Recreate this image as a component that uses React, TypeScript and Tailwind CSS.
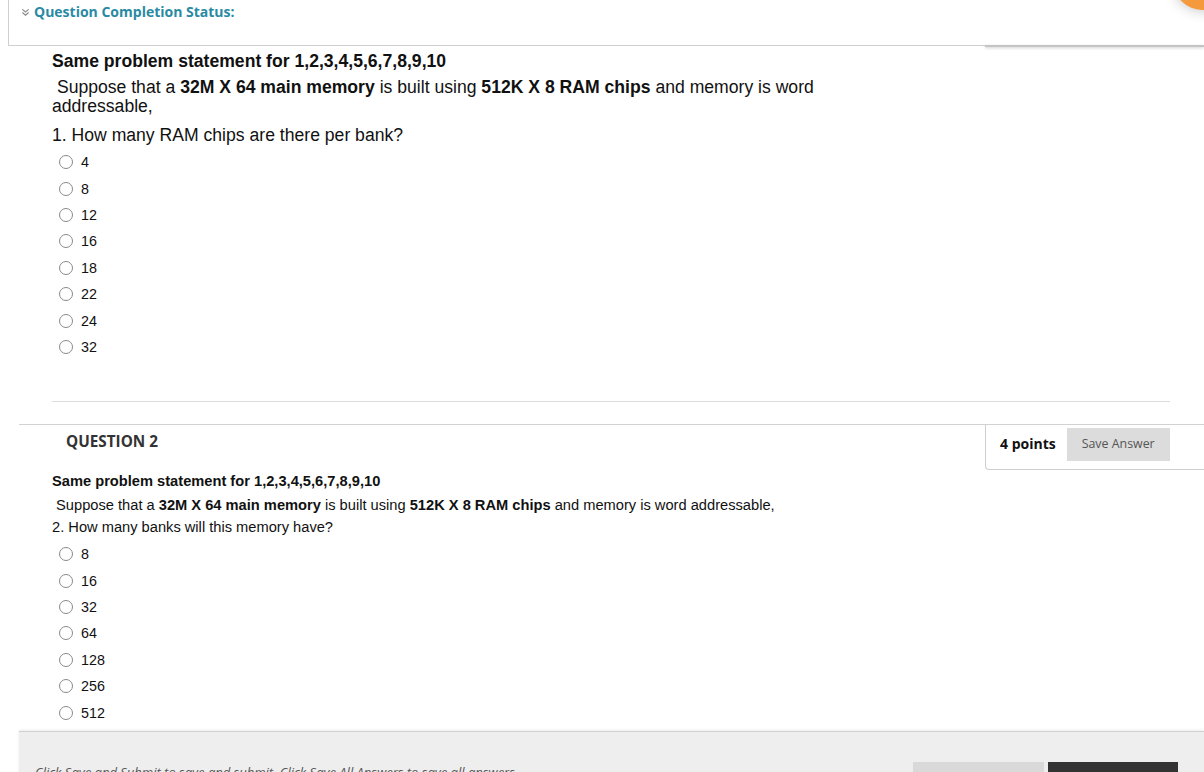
import React from 'react';

const q1Options = ['4', '8', '12', '16', '18', '22', '24', '32'];
const q2Options = ['8', '16', '32', '64', '128', '256', '512'];

function Radio({ label }: { label: string }) {
  return (
    <div className="flex h-[26.4px] items-center">
      <span className="ml-[7px] h-[14px] w-[14px] rounded-full border border-[#8a8a8a] bg-white" />
      <span className="ml-[8px] text-[14.3px] leading-[16px] text-[#111]">{label}</span>
    </div>
  );
}

function DoubleChevron() {
  return (
    <svg width="9" height="9" viewBox="0 0 10 10" className="mr-[4px] mt-[1px]">
      <path d="M1.5 1.5 L5 4.5 L8.5 1.5" fill="none" stroke="#8a8a8a" strokeWidth="1.3" />
      <path d="M1.5 5 L5 8 L8.5 5" fill="none" stroke="#8a8a8a" strokeWidth="1.3" />
    </svg>
  );
}

export default function App() {
  return (
    <div className="relative h-[772px] w-[1204px] overflow-hidden bg-white font-['Liberation_Sans',Arial,sans-serif] text-[#111]">
      {/* orange corner badge */}
      <div className="absolute right-[-34px] top-[-46px] h-[56px] w-[64px] rounded-full bg-[#f59a3c] shadow-[0_0_14px_rgba(0,0,0,0.25)]" />

      {/* Question Completion Status */}
      <div className="relative ml-[8px] h-[46px] border-b border-l border-[#cfcfcf]">
        <div className="flex items-center pl-[12px] pt-[3px] font-['Open_Sans',sans-serif] text-[14px] font-bold leading-[18px] text-[#2a8aa3]">
          <DoubleChevron />
          <span>Question Completion Status:</span>
        </div>
        <div className="absolute bottom-[-2px] right-0 h-[2px] w-[219px] bg-[#c4c4c4] shadow-[0_1px_3px_rgba(0,0,0,0.2)]" />
      </div>

      {/* Question 1 body */}
      <div className="pl-[52px] pt-[6px]">
        <div className="text-[17.6px] font-bold leading-[19px]">Same problem statement for 1,2,3,4,5,6,7,8,9,10</div>
        <p className="mt-[7px] max-w-[800px] text-[17.6px] leading-[19px]">
          {'\u00a0'}Suppose that a <b>32M X 64 main memory</b> is built using <b>512K X 8 RAM chips</b> and memory is word addressable,
        </p>
        <p className="mt-[10px] text-[17.6px] leading-[19px]">1. How many RAM chips are there per bank?</p>
        <div className="mt-[4px]">
          {q1Options.map((o) => (
            <Radio key={o} label={o} />
          ))}
        </div>
        <div className="mt-[41px] w-[1118px] border-t border-[#dcdcdc]" />
      </div>

      {/* Question 2 */}
      <div className="ml-[19px] mt-[22px] border-t border-[#d2d2d2]">
        <div className="flex h-[45px] items-start justify-between">
          <div className="pl-[47px] pt-[6px] font-['Open_Sans',sans-serif] text-[15.3px] font-bold leading-[20px] text-[#333]">
            QUESTION 2
          </div>
          <div className="flex h-[45px] w-[219px] items-start rounded-bl-[4px] border-b border-l border-[#cfcfcf] pl-[14px] pt-[3px]">
            <span className="mt-[7px] font-['Open_Sans',sans-serif] text-[14px] font-bold leading-[18px] text-[#111]">4 points</span>
            <button className="ml-[11px] h-[33px] w-[103px] bg-[#dcdcdc] font-['Open_Sans',sans-serif] text-[12.4px] text-[#555]">
              Save Answer
            </button>
          </div>
        </div>

        <div className="pl-[33px] pt-[3px]">
          <div className="text-[14.67px] font-bold leading-[16px]">Same problem statement for 1,2,3,4,5,6,7,8,9,10</div>
          <p className="mt-[8px] text-[14.67px] leading-[16px]">
            {'\u00a0'}Suppose that a <b>32M X 64 main memory</b> is built using <b>512K X 8 RAM chips</b> and memory is word addressable,
          </p>
          <p className="mt-[6px] text-[14.67px] leading-[16px]">2. How many banks will this memory have?</p>
          <div className="mt-[6px]">
            {q2Options.map((o) => (
              <Radio key={o} label={o} />
            ))}
          </div>
        </div>
      </div>

      {/* Bottom submit bar */}
      <div className="ml-[19px] mt-[5px] h-[60px] border-t border-[#cfcfcf] bg-[#eeeeee] shadow-[0_-1px_3px_rgba(0,0,0,0.08)]">
        <div className="flex items-start justify-between pr-[26px]">
          <p className="pl-[16px] pt-[32px] font-['Open_Sans',sans-serif] text-[13px] italic leading-[16px] text-[#555]">
            Click Save and Submit to save and submit. Click Save All Answers to save all answers.
          </p>
          <div className="flex gap-[4px] pt-[30px]">
            <button className="h-[32px] w-[131px] bg-[#d9d9d9] font-['Open_Sans',sans-serif] text-[13px] text-[#333]">
              Save All Answers
            </button>
            <button className="h-[32px] w-[130px] bg-[#333333] font-['Open_Sans',sans-serif] text-[13px] text-white">
              Save and Submit
            </button>
          </div>
        </div>
      </div>
    </div>
  );
}
